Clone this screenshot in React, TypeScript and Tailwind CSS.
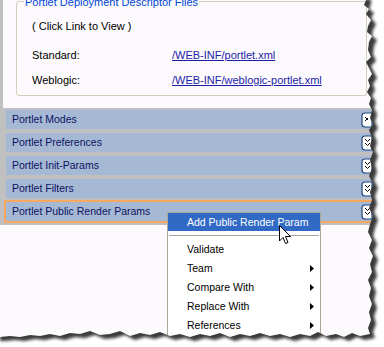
import React from "react";

const sections = [
  "Portlet Modes",
  "Portlet Preferences",
  "Portlet Init-Params",
  "Portlet Filters",
  "Portlet Public Render Params",
];

const menuItems = [
  { label: "Validate", sub: false },
  { label: "Team", sub: true },
  { label: "Compare With", sub: true },
  { label: "Replace With", sub: true },
  { label: "References", sub: true },
];

// jagged outline of the torn screenshot edge
const rightEdge = [
  [366, 0], [364, 5], [369, 9], [366, 14], [371, 20], [368, 26], [367, 32], [372, 36], [369, 42],
  [368, 50], [371, 57], [366, 62], [369, 68], [372, 74], [368, 80], [370, 86], [367, 92], [371, 98],
  [369, 104], [372, 110], [370, 118], [373, 124], [369, 130], [372, 138], [370, 146], [373, 152],
  [370, 160], [372, 168], [369, 176], [373, 184], [370, 192], [372, 200], [369, 208], [373, 216],
  [370, 224], [368, 232], [372, 240], [369, 248], [373, 256], [370, 264], [372, 272], [368, 280],
  [371, 288], [369, 296], [372, 304], [369, 312], [371, 320], [368, 328], [370, 334],
];
const bottomEdge = [
  [360, 336], [352, 333], [344, 337], [336, 334], [326, 336], [318, 332], [310, 336], [300, 334],
  [290, 337], [280, 334], [270, 336], [260, 333], [250, 336], [240, 334], [230, 337], [220, 333],
  [210, 336], [200, 334], [190, 337], [180, 334], [170, 336], [160, 332], [150, 335], [140, 333],
  [130, 336], [120, 331], [110, 334], [100, 335], [90, 331], [80, 334], [70, 333], [60, 336],
  [50, 334], [40, 336], [30, 335], [20, 337], [10, 336], [0, 337],
];
const paper =
  "M-5,-5 L366,-5 " +
  [...rightEdge, ...bottomEdge].map(([x, y]) => `L${x},${y}`).join(" ") +
  " L-5,337 Z";

function Twisty({ open }: { open?: boolean }) {
  return (
    <svg width="12" height="16" viewBox="0 0 12 16">
      <path d="M11 1 H4 Q1 1 1 4 V12 Q1 15 4 15 H11 Z" fill="#ffffff" stroke="#24467e" strokeWidth="1.2" />
      {open ? (
        <path d="M4 5 L7 8 M4 9 L7 6" stroke="#000" strokeWidth="1" fill="none" />
      ) : (
        <path d="M4 4 L6.5 6.5 L9 4 M4 8 L6.5 10.5 L9 8" stroke="#000" strokeWidth="1" fill="none" />
      )}
    </svg>
  );
}

export default function App() {
  return (
    <div
      className="relative w-[384px] h-[347px] overflow-hidden bg-[#fcfafc] text-black"
      style={{ fontFamily: '"Liberation Sans", Arial, sans-serif' }}
    >
      <div className="flex flex-col border-l-[3px] border-[#c0c0c0]">
        {/* descriptor group */}
        <div className="h-[108px] pl-[13px] pt-[1px]">
          <div className="w-[351px] h-[95px] border border-[#d0d0bf] rounded-[3px] pl-[15px] text-[11px] leading-[13px]">
            <div className="-mt-[6px] -ml-[8px] w-fit bg-[#fcfafc] px-[1px] text-[#0046d5]">
              Portlet Deployment Descriptor Files
            </div>
            <div className="mt-[11px]">( Click Link to View )</div>
            <div className="mt-[16px] flex">
              <span className="w-[140px]">Standard:</span>
              <span className="text-[#1c1ca8] underline">/WEB-INF/portlet.xml</span>
            </div>
            <div className="mt-[12px] flex">
              <span className="w-[140px]">Weblogic:</span>
              <span className="text-[#1c1ca8] underline">/WEB-INF/weblogic-portlet.xml</span>
            </div>
          </div>
        </div>

        {/* sections */}
        <div className="flex flex-col gap-[4px] bg-[#c0c0c0] pl-[3px] pt-[2px] pb-[4px]">
          {sections.map((s, i) => (
            <div
              key={s}
              className={`flex h-[19px] items-center justify-between bg-[#a5b9d5] pl-[6px] pr-[11px] text-[10.5px] text-[#0e1260] ${
                i === sections.length - 1 ? "ring-2 ring-[#f8a860]" : ""
              }`}
            >
              <span>{s}</span>
              <Twisty open={i === 0} />
            </div>
          ))}
        </div>
      </div>

      {/* context menu */}
      <div className="absolute left-[167px] top-[212px] w-[154px] h-[140px] border border-[#aca899] bg-white text-[10.5px] leading-[13px]">
        <div className="flex h-[18px] items-center bg-[#316ac5] pl-[19px] text-white">Add Public Render Param</div>
        <div className="flex h-[9px] items-center px-[1px]">
          <div className="h-[2px] w-full border-t border-[#aca899] border-b-white"></div>
        </div>
        {menuItems.map((m) => (
          <div key={m.label} className="flex h-[19px] items-center justify-between pl-[19px] pr-[6px]">
            <span>{m.label}</span>
            {m.sub && (
              <svg width="4" height="7" viewBox="0 0 4 7">
                <path d="M0 0 L4 3.5 L0 7 Z" fill="#000" />
              </svg>
            )}
          </div>
        ))}
      </div>

      {/* mouse pointer */}
      <svg className="absolute left-[279px] top-[225px]" width="13" height="20" viewBox="0 0 13 20">
        <path d="M0.5 0.5 L0.5 16 L4 12.5 L6.5 18.5 L9 17.5 L6.5 11.5 L11.5 11.5 Z" fill="#fff" stroke="#000" strokeWidth="1" />
      </svg>

      {/* torn paper edge */}
      <svg className="pointer-events-none absolute inset-0" width="384" height="347" viewBox="0 0 384 347">
        <defs>
          <mask id="outside">
            <rect x="0" y="0" width="384" height="347" fill="#fff" />
            <path d={paper} fill="#000" />
          </mask>
          <filter id="soft" x="-10%" y="-10%" width="120%" height="120%">
            <feGaussianBlur stdDeviation="1.6" />
          </filter>
        </defs>
        <g mask="url(#outside)">
          <rect x="0" y="0" width="384" height="347" fill="#ffffff" />
          <path d={paper} transform="translate(5 4)" fill="#3a3a3a" filter="url(#soft)" />
        </g>
      </svg>
    </div>
  );
}
